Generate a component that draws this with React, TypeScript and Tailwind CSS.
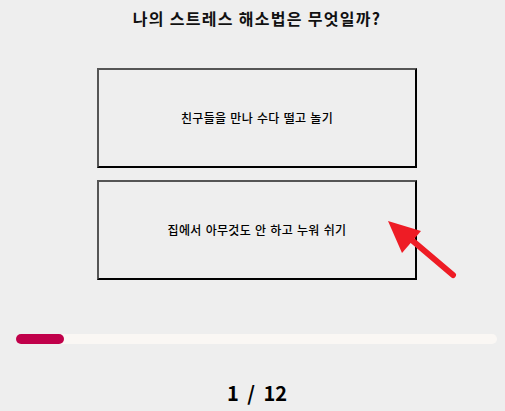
import React from "react";

export default function App() {
  const font = { fontFamily: '"Noto Sans CJK KR", "Noto Sans", sans-serif' };
  return (
    <div className="w-[505px] h-[411px] bg-[#eeeeee] relative overflow-hidden flex flex-col items-center pl-[9px]" style={font}>
      <h1 className="mt-[6px] h-[24px] text-[16px] leading-[24px] font-bold tracking-[1.3px] text-[#111]">나의 스트레스 해소법은 무엇일까?</h1>
      <div className="mt-[38px] flex flex-col gap-[12px]">
        <button className="w-[320px] h-[100px] border-2 border-t-[#555] border-l-[#555] border-b-black border-r-black bg-[#eeeeee] text-[12px] font-medium tracking-[0.3px] [word-spacing:1px] text-black">
          친구들을 만나 수다 떨고 놀기
        </button>
        <button className="w-[320px] h-[100px] border-2 border-t-[#555] border-l-[#555] border-b-black border-r-black bg-[#eeeeee] text-[12px] font-medium tracking-[0.3px] [word-spacing:1px] text-black">
          집에서 아무것도 안 하고 누워 쉬기
        </button>
      </div>
      <div className="mt-[54px] w-[481px] h-[10px] rounded-full bg-[#faf7f4] self-start ml-[7px]">
        <div className="h-full w-[48px] rounded-full bg-[#c0004a]" />
      </div>
      <div className="mt-[34px] text-[20px] font-bold leading-[30px] [word-spacing:4px] text-black">1 / 12</div>
      <svg className="absolute left-[385px] top-[218px]" width="75" height="65" viewBox="0 0 75 65">
        <line x1="68" y1="57" x2="22" y2="18" stroke="#ee1c25" strokeWidth="6" strokeLinecap="round" />
        <polygon points="3,3 36,13 17,35" fill="#ee1c25" />
      </svg>
    </div>
  );
}
